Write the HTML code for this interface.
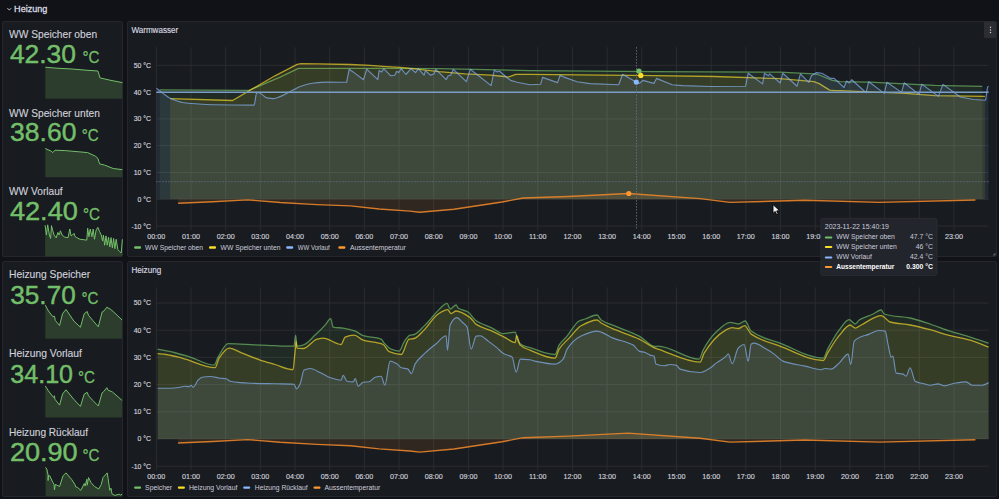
<!DOCTYPE html><html><head><meta charset="utf-8"><style>*{margin:0;padding:0}html,body{width:999px;height:499px;overflow:hidden;background:#111217}svg{display:block;font-family:'Liberation Sans',sans-serif;}</style></head><body>
<svg width="999" height="499" viewBox="0 0 999 499">
<rect width="999" height="499" fill="#111217"/>
<path d="M7.4 8.1 L9.3 10.1 L11.2 8.1" fill="none" stroke="#ccccdc" stroke-width="0.9"/>
<text x="14.1" y="11.6" font-size="9.1" fill="#d8d9e0" textLength="33.3" lengthAdjust="spacingAndGlyphs" stroke="#d8d9e0" stroke-width="0.3">Heizung</text>
<rect x="2.5" y="21.5" width="120" height="235" rx="1.5" fill="#181b1f" stroke="#24262c" stroke-width="1"/>
<rect x="2.5" y="261.5" width="120" height="235" rx="1.5" fill="#181b1f" stroke="#24262c" stroke-width="1"/>
<rect x="127.5" y="21.5" width="869" height="235" rx="1.5" fill="#181b1f" stroke="#24262c" stroke-width="1"/>
<rect x="127.5" y="261.5" width="869" height="235" rx="1.5" fill="#181b1f" stroke="#24262c" stroke-width="1"/>
<path d="M45.3 67.2 L57 68.2 L72 69 L85 70.1 L97.9 71 L100 77.9 L110 80.2 L122.4 82.6 L122.4 98.7 L45.3 98.7 Z" fill="#2c3c2d"/>
<path d="M45.3 67.2 L57 68.2 L72 69 L85 70.1 L97.9 71 L100 77.9 L110 80.2 L122.4 82.6" fill="none" stroke="#73bf69" stroke-width="1" stroke-linejoin="round"/>
<text x="9.1" y="37.7" font-size="10.2" fill="#d0d1dc" textLength="88" lengthAdjust="spacingAndGlyphs" stroke="#d0d1dc" stroke-width="0.12">WW Speicher oben</text>
<text x="9.9" y="62.5" font-size="25.5" fill="#73bf69" textLength="66.1" lengthAdjust="spacingAndGlyphs" stroke="#73bf69" stroke-width="0.45">42.30</text>
<text x="82.5" y="62.5" font-size="15.8" fill="#73bf69" textLength="17" lengthAdjust="spacingAndGlyphs" stroke="#73bf69" stroke-width="0.3">°C</text>
<path d="M45.28 148.51 L51.06 151.06 L52.77 152.6 L54.89 150.21 L65.53 150.64 L78.3 151.74 L87.66 152.6 L95.32 156.17 L97.87 158.3 L99.57 163.83 L104.68 165.11 L113.19 168.51 L122.38 169.62 L122.38 177.2 L45.28 177.2 Z" fill="#2c3c2d"/>
<path d="M45.28 148.51 L51.06 151.06 L52.77 152.6 L54.89 150.21 L65.53 150.64 L78.3 151.74 L87.66 152.6 L95.32 156.17 L97.87 158.3 L99.57 163.83 L104.68 165.11 L113.19 168.51 L122.38 169.62" fill="none" stroke="#73bf69" stroke-width="1" stroke-linejoin="round"/>
<text x="9.1" y="116.7" font-size="10.2" fill="#d0d1dc" textLength="90.8" lengthAdjust="spacingAndGlyphs" stroke="#d0d1dc" stroke-width="0.12">WW Speicher unten</text>
<text x="10.1" y="141.4" font-size="25.5" fill="#73bf69" textLength="66.3" lengthAdjust="spacingAndGlyphs" stroke="#73bf69" stroke-width="0.45">38.60</text>
<text x="81.8" y="141.4" font-size="15.8" fill="#73bf69" textLength="17" lengthAdjust="spacingAndGlyphs" stroke="#73bf69" stroke-width="0.3">°C</text>
<path d="M45.11 225.23 L46.38 235.02 L47.66 224.81 L49.36 235.02 L50.64 238.43 L51.49 225.66 L52.77 230.77 L54.04 235.02 L56.17 238 L57.87 232.47 L59.15 235.02 L60.43 230.77 L62.13 235.02 L64.68 237.15 L68.09 237.57 L69.79 229.06 L71.06 235.87 L72.34 235.02 L74.04 233.32 L74.89 236.3 L76.6 237.57 L80 239.28 L86.81 240.13 L87.66 228.21 L88.94 236.72 L90.21 229.06 L91.91 236.72 L93.19 229.06 L94.47 239.28 L96.17 229.91 L97.87 227.36 L99.57 231.62 L101.28 235.02 L102.55 240.98 L103.4 235.02 L104.68 245.23 L105.96 235.87 L107.23 245.23 L108.51 237.15 L109.79 246.94 L111.06 237.57 L112.34 247.79 L113.62 238.43 L114.89 248.64 L116.17 239.28 L117.87 249.49 L119.57 251.62 L121.28 252.89 L122.38 239.28 L122.38 256.5 L45.11 256.5 Z" fill="#2c3c2d"/>
<path d="M45.11 225.23 L46.38 235.02 L47.66 224.81 L49.36 235.02 L50.64 238.43 L51.49 225.66 L52.77 230.77 L54.04 235.02 L56.17 238 L57.87 232.47 L59.15 235.02 L60.43 230.77 L62.13 235.02 L64.68 237.15 L68.09 237.57 L69.79 229.06 L71.06 235.87 L72.34 235.02 L74.04 233.32 L74.89 236.3 L76.6 237.57 L80 239.28 L86.81 240.13 L87.66 228.21 L88.94 236.72 L90.21 229.06 L91.91 236.72 L93.19 229.06 L94.47 239.28 L96.17 229.91 L97.87 227.36 L99.57 231.62 L101.28 235.02 L102.55 240.98 L103.4 235.02 L104.68 245.23 L105.96 235.87 L107.23 245.23 L108.51 237.15 L109.79 246.94 L111.06 237.57 L112.34 247.79 L113.62 238.43 L114.89 248.64 L116.17 239.28 L117.87 249.49 L119.57 251.62 L121.28 252.89 L122.38 239.28" fill="none" stroke="#73bf69" stroke-width="1" stroke-linejoin="round"/>
<text x="9" y="194.7" font-size="10.2" fill="#d0d1dc" textLength="53.7" lengthAdjust="spacingAndGlyphs" stroke="#d0d1dc" stroke-width="0.12">WW Vorlauf</text>
<text x="9.9" y="220.3" font-size="25.5" fill="#73bf69" textLength="68" lengthAdjust="spacingAndGlyphs" stroke="#73bf69" stroke-width="0.45">42.40</text>
<text x="83" y="220.3" font-size="15.8" fill="#73bf69" textLength="17" lengthAdjust="spacingAndGlyphs" stroke="#73bf69" stroke-width="0.3">°C</text>
<path d="M45.28 305.11 L48.51 311.06 L52.77 316.6 L54.47 316.17 L55.32 320.43 L59.57 325.53 L62.55 313.62 L65.96 309.36 L74.04 321.28 L80.43 327.23 L84.26 313.62 L87.23 311.49 L88.51 315.32 L92.77 320.43 L98.3 326.81 L102.13 311.91 L103.83 311.06 L106.81 307.23 L110.64 309.36 L113.19 311.49 L122.13 320 L122.13 338.8 L45.28 338.8 Z" fill="#2c3c2d"/>
<path d="M45.28 305.11 L48.51 311.06 L52.77 316.6 L54.47 316.17 L55.32 320.43 L59.57 325.53 L62.55 313.62 L65.96 309.36 L74.04 321.28 L80.43 327.23 L84.26 313.62 L87.23 311.49 L88.51 315.32 L92.77 320.43 L98.3 326.81 L102.13 311.91 L103.83 311.06 L106.81 307.23 L110.64 309.36 L113.19 311.49 L122.13 320" fill="none" stroke="#73bf69" stroke-width="1" stroke-linejoin="round"/>
<text x="9" y="277.9" font-size="10.2" fill="#d0d1dc" textLength="81.2" lengthAdjust="spacingAndGlyphs" stroke="#d0d1dc" stroke-width="0.12">Heizung Speicher</text>
<text x="10.3" y="303.7" font-size="25.5" fill="#73bf69" textLength="65.4" lengthAdjust="spacingAndGlyphs" stroke="#73bf69" stroke-width="0.45">35.70</text>
<text x="81.5" y="303.7" font-size="15.8" fill="#73bf69" textLength="17" lengthAdjust="spacingAndGlyphs" stroke="#73bf69" stroke-width="0.3">°C</text>
<path d="M45.28 385.96 L48.51 391.06 L53.62 397.45 L54.47 395.74 L54.89 399.15 L59.57 405.11 L62.55 394.04 L65.96 389.79 L74.04 399.57 L80.43 406.38 L84.26 394.04 L87.23 392.34 L88.51 395.74 L92.77 400.43 L98.3 405.96 L102.13 392.77 L103.83 391.49 L106.81 387.66 L108.09 390.21 L112.34 391.91 L122.13 400.43 L122.13 417.6 L45.28 417.6 Z" fill="#2c3c2d"/>
<path d="M45.28 385.96 L48.51 391.06 L53.62 397.45 L54.47 395.74 L54.89 399.15 L59.57 405.11 L62.55 394.04 L65.96 389.79 L74.04 399.57 L80.43 406.38 L84.26 394.04 L87.23 392.34 L88.51 395.74 L92.77 400.43 L98.3 405.96 L102.13 392.77 L103.83 391.49 L106.81 387.66 L108.09 390.21 L112.34 391.91 L122.13 400.43" fill="none" stroke="#73bf69" stroke-width="1" stroke-linejoin="round"/>
<text x="9" y="357" font-size="10.2" fill="#d0d1dc" textLength="73" lengthAdjust="spacingAndGlyphs" stroke="#d0d1dc" stroke-width="0.12">Heizung Vorlauf</text>
<text x="10.3" y="382.8" font-size="25.5" fill="#73bf69" textLength="62.7" lengthAdjust="spacingAndGlyphs" stroke="#73bf69" stroke-width="0.45">34.10</text>
<text x="77.9" y="382.8" font-size="15.8" fill="#73bf69" textLength="17" lengthAdjust="spacingAndGlyphs" stroke="#73bf69" stroke-width="0.3">°C</text>
<path d="M45.53 467.36 L46.81 469.06 L48.09 475.02 L48.09 480.55 L48.51 475.45 L49.79 475.87 L52.77 482.26 L54.04 484.38 L54.47 489.91 L55.32 484.38 L59.57 486.51 L62.98 475.87 L65.96 472.89 L71.49 479.28 L74.89 484.38 L75.74 486.94 L77.45 487.36 L80.85 490.34 L84.26 483.53 L85.11 486.09 L86.81 479.28 L87.23 485.23 L88.51 477.57 L91.06 482.68 L94.47 486.51 L98.72 489.06 L101.28 484.38 L102.98 477.57 L107.23 472.89 L108.09 478.43 L109.79 490.34 L110.64 488.64 L111.06 488.21 L111.91 493.74 L114.89 495.45 L119.15 494.17 L120.43 495.02 L122.13 494.17 L122.13 496.3 L45.53 496.3 Z" fill="#2c3c2d"/>
<path d="M45.53 467.36 L46.81 469.06 L48.09 475.02 L48.09 480.55 L48.51 475.45 L49.79 475.87 L52.77 482.26 L54.04 484.38 L54.47 489.91 L55.32 484.38 L59.57 486.51 L62.98 475.87 L65.96 472.89 L71.49 479.28 L74.89 484.38 L75.74 486.94 L77.45 487.36 L80.85 490.34 L84.26 483.53 L85.11 486.09 L86.81 479.28 L87.23 485.23 L88.51 477.57 L91.06 482.68 L94.47 486.51 L98.72 489.06 L101.28 484.38 L102.98 477.57 L107.23 472.89 L108.09 478.43 L109.79 490.34 L110.64 488.64 L111.06 488.21 L111.91 493.74 L114.89 495.45 L119.15 494.17 L120.43 495.02 L122.13 494.17" fill="none" stroke="#73bf69" stroke-width="1" stroke-linejoin="round"/>
<text x="9" y="435.6" font-size="10.2" fill="#d0d1dc" textLength="79" lengthAdjust="spacingAndGlyphs" stroke="#d0d1dc" stroke-width="0.12">Heizung Rücklauf</text>
<text x="9.9" y="461.3" font-size="25.5" fill="#73bf69" textLength="67.8" lengthAdjust="spacingAndGlyphs" stroke="#73bf69" stroke-width="0.45">20.90</text>
<text x="82.5" y="461.3" font-size="15.8" fill="#73bf69" textLength="17" lengthAdjust="spacingAndGlyphs" stroke="#73bf69" stroke-width="0.3">°C</text>
<text x="131.4" y="32.8" font-size="8.4" fill="#d8d9e0" textLength="46.8" lengthAdjust="spacingAndGlyphs" stroke="#d8d9e0" stroke-width="0.15">Warmwasser</text>
<line x1="156.3" x2="988.6" y1="226.1" y2="226.1" stroke="#2a2c31" stroke-width="1"/>
<text x="151" y="228.55" font-size="6.9" fill="#d0d1dc" text-anchor="end" stroke="#d0d1dc" stroke-width="0.15">-10 °C</text>
<line x1="156.3" x2="988.6" y1="199.3" y2="199.3" stroke="#2a2c31" stroke-width="1"/>
<text x="151" y="201.75" font-size="6.9" fill="#d0d1dc" text-anchor="end" stroke="#d0d1dc" stroke-width="0.15">0 °C</text>
<line x1="156.3" x2="988.6" y1="172.5" y2="172.5" stroke="#2a2c31" stroke-width="1"/>
<text x="151" y="174.95" font-size="6.9" fill="#d0d1dc" text-anchor="end" stroke="#d0d1dc" stroke-width="0.15">10 °C</text>
<line x1="156.3" x2="988.6" y1="145.7" y2="145.7" stroke="#2a2c31" stroke-width="1"/>
<text x="151" y="148.15" font-size="6.9" fill="#d0d1dc" text-anchor="end" stroke="#d0d1dc" stroke-width="0.15">20 °C</text>
<line x1="156.3" x2="988.6" y1="118.9" y2="118.9" stroke="#2a2c31" stroke-width="1"/>
<text x="151" y="121.35" font-size="6.9" fill="#d0d1dc" text-anchor="end" stroke="#d0d1dc" stroke-width="0.15">30 °C</text>
<line x1="156.3" x2="988.6" y1="92.1" y2="92.1" stroke="#2a2c31" stroke-width="1"/>
<text x="151" y="94.55" font-size="6.9" fill="#d0d1dc" text-anchor="end" stroke="#d0d1dc" stroke-width="0.15">40 °C</text>
<line x1="156.3" x2="988.6" y1="65.3" y2="65.3" stroke="#2a2c31" stroke-width="1"/>
<text x="151" y="67.75" font-size="6.9" fill="#d0d1dc" text-anchor="end" stroke="#d0d1dc" stroke-width="0.15">50 °C</text>
<line x1="156.3" x2="156.3" y1="47.2" y2="230.2" stroke="#2a2c31" stroke-width="1"/>
<text x="156.3" y="238.8" font-size="7.2" fill="#d0d1dc" text-anchor="middle" stroke="#d0d1dc" stroke-width="0.15">00:00</text>
<line x1="190.98" x2="190.98" y1="47.2" y2="230.2" stroke="#2a2c31" stroke-width="1"/>
<text x="190.98" y="238.8" font-size="7.2" fill="#d0d1dc" text-anchor="middle" stroke="#d0d1dc" stroke-width="0.15">01:00</text>
<line x1="225.66" x2="225.66" y1="47.2" y2="230.2" stroke="#2a2c31" stroke-width="1"/>
<text x="225.66" y="238.8" font-size="7.2" fill="#d0d1dc" text-anchor="middle" stroke="#d0d1dc" stroke-width="0.15">02:00</text>
<line x1="260.34" x2="260.34" y1="47.2" y2="230.2" stroke="#2a2c31" stroke-width="1"/>
<text x="260.34" y="238.8" font-size="7.2" fill="#d0d1dc" text-anchor="middle" stroke="#d0d1dc" stroke-width="0.15">03:00</text>
<line x1="295.02" x2="295.02" y1="47.2" y2="230.2" stroke="#2a2c31" stroke-width="1"/>
<text x="295.02" y="238.8" font-size="7.2" fill="#d0d1dc" text-anchor="middle" stroke="#d0d1dc" stroke-width="0.15">04:00</text>
<line x1="329.7" x2="329.7" y1="47.2" y2="230.2" stroke="#2a2c31" stroke-width="1"/>
<text x="329.7" y="238.8" font-size="7.2" fill="#d0d1dc" text-anchor="middle" stroke="#d0d1dc" stroke-width="0.15">05:00</text>
<line x1="364.38" x2="364.38" y1="47.2" y2="230.2" stroke="#2a2c31" stroke-width="1"/>
<text x="364.38" y="238.8" font-size="7.2" fill="#d0d1dc" text-anchor="middle" stroke="#d0d1dc" stroke-width="0.15">06:00</text>
<line x1="399.06" x2="399.06" y1="47.2" y2="230.2" stroke="#2a2c31" stroke-width="1"/>
<text x="399.06" y="238.8" font-size="7.2" fill="#d0d1dc" text-anchor="middle" stroke="#d0d1dc" stroke-width="0.15">07:00</text>
<line x1="433.74" x2="433.74" y1="47.2" y2="230.2" stroke="#2a2c31" stroke-width="1"/>
<text x="433.74" y="238.8" font-size="7.2" fill="#d0d1dc" text-anchor="middle" stroke="#d0d1dc" stroke-width="0.15">08:00</text>
<line x1="468.42" x2="468.42" y1="47.2" y2="230.2" stroke="#2a2c31" stroke-width="1"/>
<text x="468.42" y="238.8" font-size="7.2" fill="#d0d1dc" text-anchor="middle" stroke="#d0d1dc" stroke-width="0.15">09:00</text>
<line x1="503.1" x2="503.1" y1="47.2" y2="230.2" stroke="#2a2c31" stroke-width="1"/>
<text x="503.1" y="238.8" font-size="7.2" fill="#d0d1dc" text-anchor="middle" stroke="#d0d1dc" stroke-width="0.15">10:00</text>
<line x1="537.78" x2="537.78" y1="47.2" y2="230.2" stroke="#2a2c31" stroke-width="1"/>
<text x="537.78" y="238.8" font-size="7.2" fill="#d0d1dc" text-anchor="middle" stroke="#d0d1dc" stroke-width="0.15">11:00</text>
<line x1="572.46" x2="572.46" y1="47.2" y2="230.2" stroke="#2a2c31" stroke-width="1"/>
<text x="572.46" y="238.8" font-size="7.2" fill="#d0d1dc" text-anchor="middle" stroke="#d0d1dc" stroke-width="0.15">12:00</text>
<line x1="607.14" x2="607.14" y1="47.2" y2="230.2" stroke="#2a2c31" stroke-width="1"/>
<text x="607.14" y="238.8" font-size="7.2" fill="#d0d1dc" text-anchor="middle" stroke="#d0d1dc" stroke-width="0.15">13:00</text>
<line x1="641.82" x2="641.82" y1="47.2" y2="230.2" stroke="#2a2c31" stroke-width="1"/>
<text x="641.82" y="238.8" font-size="7.2" fill="#d0d1dc" text-anchor="middle" stroke="#d0d1dc" stroke-width="0.15">14:00</text>
<line x1="676.5" x2="676.5" y1="47.2" y2="230.2" stroke="#2a2c31" stroke-width="1"/>
<text x="676.5" y="238.8" font-size="7.2" fill="#d0d1dc" text-anchor="middle" stroke="#d0d1dc" stroke-width="0.15">15:00</text>
<line x1="711.18" x2="711.18" y1="47.2" y2="230.2" stroke="#2a2c31" stroke-width="1"/>
<text x="711.18" y="238.8" font-size="7.2" fill="#d0d1dc" text-anchor="middle" stroke="#d0d1dc" stroke-width="0.15">16:00</text>
<line x1="745.86" x2="745.86" y1="47.2" y2="230.2" stroke="#2a2c31" stroke-width="1"/>
<text x="745.86" y="238.8" font-size="7.2" fill="#d0d1dc" text-anchor="middle" stroke="#d0d1dc" stroke-width="0.15">17:00</text>
<line x1="780.54" x2="780.54" y1="47.2" y2="230.2" stroke="#2a2c31" stroke-width="1"/>
<text x="780.54" y="238.8" font-size="7.2" fill="#d0d1dc" text-anchor="middle" stroke="#d0d1dc" stroke-width="0.15">18:00</text>
<line x1="815.22" x2="815.22" y1="47.2" y2="230.2" stroke="#2a2c31" stroke-width="1"/>
<text x="815.22" y="238.8" font-size="7.2" fill="#d0d1dc" text-anchor="middle" stroke="#d0d1dc" stroke-width="0.15">19:00</text>
<line x1="849.9" x2="849.9" y1="47.2" y2="230.2" stroke="#2a2c31" stroke-width="1"/>
<text x="849.9" y="238.8" font-size="7.2" fill="#d0d1dc" text-anchor="middle" stroke="#d0d1dc" stroke-width="0.15">20:00</text>
<line x1="884.58" x2="884.58" y1="47.2" y2="230.2" stroke="#2a2c31" stroke-width="1"/>
<text x="884.58" y="238.8" font-size="7.2" fill="#d0d1dc" text-anchor="middle" stroke="#d0d1dc" stroke-width="0.15">21:00</text>
<line x1="919.26" x2="919.26" y1="47.2" y2="230.2" stroke="#2a2c31" stroke-width="1"/>
<text x="919.26" y="238.8" font-size="7.2" fill="#d0d1dc" text-anchor="middle" stroke="#d0d1dc" stroke-width="0.15">22:00</text>
<line x1="953.94" x2="953.94" y1="47.2" y2="230.2" stroke="#2a2c31" stroke-width="1"/>
<text x="953.94" y="238.8" font-size="7.2" fill="#d0d1dc" text-anchor="middle" stroke="#d0d1dc" stroke-width="0.15">23:00</text>
<rect x="134.1" y="246.3" width="7" height="2.4" rx="1" fill="#73bf69"/>
<text x="145.1" y="249.8" font-size="6.8" fill="#ccccdc" textLength="58" lengthAdjust="spacingAndGlyphs">WW Speicher oben</text>
<rect x="209" y="246.3" width="7" height="2.4" rx="1" fill="#fade2a"/>
<text x="220.6" y="249.8" font-size="6.8" fill="#ccccdc" textLength="59.8" lengthAdjust="spacingAndGlyphs">WW Speicher unten</text>
<rect x="286.2" y="246.3" width="7" height="2.4" rx="1" fill="#8ab8ff"/>
<text x="297.8" y="249.8" font-size="6.8" fill="#ccccdc" textLength="32" lengthAdjust="spacingAndGlyphs">WW Vorlauf</text>
<rect x="338.4" y="246.3" width="7" height="2.4" rx="1" fill="#ff9830"/>
<text x="350" y="249.8" font-size="6.8" fill="#ccccdc" textLength="55.8" lengthAdjust="spacingAndGlyphs">Aussentemperatur</text>
<text x="131.4" y="272.9" font-size="8.4" fill="#d8d9e0" textLength="29.8" lengthAdjust="spacingAndGlyphs" stroke="#d8d9e0" stroke-width="0.15">Heizung</text>
<line x1="156.3" x2="988.6" y1="466.2" y2="466.2" stroke="#2a2c31" stroke-width="1"/>
<text x="151" y="468.65" font-size="6.9" fill="#d0d1dc" text-anchor="end" stroke="#d0d1dc" stroke-width="0.15">-10 °C</text>
<line x1="156.3" x2="988.6" y1="439" y2="439" stroke="#2a2c31" stroke-width="1"/>
<text x="151" y="441.45" font-size="6.9" fill="#d0d1dc" text-anchor="end" stroke="#d0d1dc" stroke-width="0.15">0 °C</text>
<line x1="156.3" x2="988.6" y1="411.8" y2="411.8" stroke="#2a2c31" stroke-width="1"/>
<text x="151" y="414.25" font-size="6.9" fill="#d0d1dc" text-anchor="end" stroke="#d0d1dc" stroke-width="0.15">10 °C</text>
<line x1="156.3" x2="988.6" y1="384.6" y2="384.6" stroke="#2a2c31" stroke-width="1"/>
<text x="151" y="387.05" font-size="6.9" fill="#d0d1dc" text-anchor="end" stroke="#d0d1dc" stroke-width="0.15">20 °C</text>
<line x1="156.3" x2="988.6" y1="357.4" y2="357.4" stroke="#2a2c31" stroke-width="1"/>
<text x="151" y="359.85" font-size="6.9" fill="#d0d1dc" text-anchor="end" stroke="#d0d1dc" stroke-width="0.15">30 °C</text>
<line x1="156.3" x2="988.6" y1="330.2" y2="330.2" stroke="#2a2c31" stroke-width="1"/>
<text x="151" y="332.65" font-size="6.9" fill="#d0d1dc" text-anchor="end" stroke="#d0d1dc" stroke-width="0.15">40 °C</text>
<line x1="156.3" x2="988.6" y1="303" y2="303" stroke="#2a2c31" stroke-width="1"/>
<text x="151" y="305.45" font-size="6.9" fill="#d0d1dc" text-anchor="end" stroke="#d0d1dc" stroke-width="0.15">50 °C</text>
<line x1="156.3" x2="156.3" y1="287.3" y2="470.3" stroke="#2a2c31" stroke-width="1"/>
<text x="156.3" y="478.9" font-size="7.2" fill="#d0d1dc" text-anchor="middle" stroke="#d0d1dc" stroke-width="0.15">00:00</text>
<line x1="190.98" x2="190.98" y1="287.3" y2="470.3" stroke="#2a2c31" stroke-width="1"/>
<text x="190.98" y="478.9" font-size="7.2" fill="#d0d1dc" text-anchor="middle" stroke="#d0d1dc" stroke-width="0.15">01:00</text>
<line x1="225.66" x2="225.66" y1="287.3" y2="470.3" stroke="#2a2c31" stroke-width="1"/>
<text x="225.66" y="478.9" font-size="7.2" fill="#d0d1dc" text-anchor="middle" stroke="#d0d1dc" stroke-width="0.15">02:00</text>
<line x1="260.34" x2="260.34" y1="287.3" y2="470.3" stroke="#2a2c31" stroke-width="1"/>
<text x="260.34" y="478.9" font-size="7.2" fill="#d0d1dc" text-anchor="middle" stroke="#d0d1dc" stroke-width="0.15">03:00</text>
<line x1="295.02" x2="295.02" y1="287.3" y2="470.3" stroke="#2a2c31" stroke-width="1"/>
<text x="295.02" y="478.9" font-size="7.2" fill="#d0d1dc" text-anchor="middle" stroke="#d0d1dc" stroke-width="0.15">04:00</text>
<line x1="329.7" x2="329.7" y1="287.3" y2="470.3" stroke="#2a2c31" stroke-width="1"/>
<text x="329.7" y="478.9" font-size="7.2" fill="#d0d1dc" text-anchor="middle" stroke="#d0d1dc" stroke-width="0.15">05:00</text>
<line x1="364.38" x2="364.38" y1="287.3" y2="470.3" stroke="#2a2c31" stroke-width="1"/>
<text x="364.38" y="478.9" font-size="7.2" fill="#d0d1dc" text-anchor="middle" stroke="#d0d1dc" stroke-width="0.15">06:00</text>
<line x1="399.06" x2="399.06" y1="287.3" y2="470.3" stroke="#2a2c31" stroke-width="1"/>
<text x="399.06" y="478.9" font-size="7.2" fill="#d0d1dc" text-anchor="middle" stroke="#d0d1dc" stroke-width="0.15">07:00</text>
<line x1="433.74" x2="433.74" y1="287.3" y2="470.3" stroke="#2a2c31" stroke-width="1"/>
<text x="433.74" y="478.9" font-size="7.2" fill="#d0d1dc" text-anchor="middle" stroke="#d0d1dc" stroke-width="0.15">08:00</text>
<line x1="468.42" x2="468.42" y1="287.3" y2="470.3" stroke="#2a2c31" stroke-width="1"/>
<text x="468.42" y="478.9" font-size="7.2" fill="#d0d1dc" text-anchor="middle" stroke="#d0d1dc" stroke-width="0.15">09:00</text>
<line x1="503.1" x2="503.1" y1="287.3" y2="470.3" stroke="#2a2c31" stroke-width="1"/>
<text x="503.1" y="478.9" font-size="7.2" fill="#d0d1dc" text-anchor="middle" stroke="#d0d1dc" stroke-width="0.15">10:00</text>
<line x1="537.78" x2="537.78" y1="287.3" y2="470.3" stroke="#2a2c31" stroke-width="1"/>
<text x="537.78" y="478.9" font-size="7.2" fill="#d0d1dc" text-anchor="middle" stroke="#d0d1dc" stroke-width="0.15">11:00</text>
<line x1="572.46" x2="572.46" y1="287.3" y2="470.3" stroke="#2a2c31" stroke-width="1"/>
<text x="572.46" y="478.9" font-size="7.2" fill="#d0d1dc" text-anchor="middle" stroke="#d0d1dc" stroke-width="0.15">12:00</text>
<line x1="607.14" x2="607.14" y1="287.3" y2="470.3" stroke="#2a2c31" stroke-width="1"/>
<text x="607.14" y="478.9" font-size="7.2" fill="#d0d1dc" text-anchor="middle" stroke="#d0d1dc" stroke-width="0.15">13:00</text>
<line x1="641.82" x2="641.82" y1="287.3" y2="470.3" stroke="#2a2c31" stroke-width="1"/>
<text x="641.82" y="478.9" font-size="7.2" fill="#d0d1dc" text-anchor="middle" stroke="#d0d1dc" stroke-width="0.15">14:00</text>
<line x1="676.5" x2="676.5" y1="287.3" y2="470.3" stroke="#2a2c31" stroke-width="1"/>
<text x="676.5" y="478.9" font-size="7.2" fill="#d0d1dc" text-anchor="middle" stroke="#d0d1dc" stroke-width="0.15">15:00</text>
<line x1="711.18" x2="711.18" y1="287.3" y2="470.3" stroke="#2a2c31" stroke-width="1"/>
<text x="711.18" y="478.9" font-size="7.2" fill="#d0d1dc" text-anchor="middle" stroke="#d0d1dc" stroke-width="0.15">16:00</text>
<line x1="745.86" x2="745.86" y1="287.3" y2="470.3" stroke="#2a2c31" stroke-width="1"/>
<text x="745.86" y="478.9" font-size="7.2" fill="#d0d1dc" text-anchor="middle" stroke="#d0d1dc" stroke-width="0.15">17:00</text>
<line x1="780.54" x2="780.54" y1="287.3" y2="470.3" stroke="#2a2c31" stroke-width="1"/>
<text x="780.54" y="478.9" font-size="7.2" fill="#d0d1dc" text-anchor="middle" stroke="#d0d1dc" stroke-width="0.15">18:00</text>
<line x1="815.22" x2="815.22" y1="287.3" y2="470.3" stroke="#2a2c31" stroke-width="1"/>
<text x="815.22" y="478.9" font-size="7.2" fill="#d0d1dc" text-anchor="middle" stroke="#d0d1dc" stroke-width="0.15">19:00</text>
<line x1="849.9" x2="849.9" y1="287.3" y2="470.3" stroke="#2a2c31" stroke-width="1"/>
<text x="849.9" y="478.9" font-size="7.2" fill="#d0d1dc" text-anchor="middle" stroke="#d0d1dc" stroke-width="0.15">20:00</text>
<line x1="884.58" x2="884.58" y1="287.3" y2="470.3" stroke="#2a2c31" stroke-width="1"/>
<text x="884.58" y="478.9" font-size="7.2" fill="#d0d1dc" text-anchor="middle" stroke="#d0d1dc" stroke-width="0.15">21:00</text>
<line x1="919.26" x2="919.26" y1="287.3" y2="470.3" stroke="#2a2c31" stroke-width="1"/>
<text x="919.26" y="478.9" font-size="7.2" fill="#d0d1dc" text-anchor="middle" stroke="#d0d1dc" stroke-width="0.15">22:00</text>
<line x1="953.94" x2="953.94" y1="287.3" y2="470.3" stroke="#2a2c31" stroke-width="1"/>
<text x="953.94" y="478.9" font-size="7.2" fill="#d0d1dc" text-anchor="middle" stroke="#d0d1dc" stroke-width="0.15">23:00</text>
<rect x="134.1" y="486.4" width="7" height="2.4" rx="1" fill="#73bf69"/>
<text x="145.1" y="489.9" font-size="6.8" fill="#ccccdc" textLength="27" lengthAdjust="spacingAndGlyphs">Speicher</text>
<rect x="177.9" y="486.4" width="7" height="2.4" rx="1" fill="#fade2a"/>
<text x="188.9" y="489.9" font-size="6.8" fill="#ccccdc" textLength="48.5" lengthAdjust="spacingAndGlyphs">Heizung Vorlauf</text>
<rect x="243.2" y="486.4" width="7" height="2.4" rx="1" fill="#8ab8ff"/>
<text x="254.8" y="489.9" font-size="6.8" fill="#ccccdc" textLength="52.8" lengthAdjust="spacingAndGlyphs">Heizung Rücklauf</text>
<rect x="313.5" y="486.4" width="7" height="2.4" rx="1" fill="#ff9830"/>
<text x="324.5" y="489.9" font-size="6.8" fill="#ccccdc" textLength="55.7" lengthAdjust="spacingAndGlyphs">Aussentemperatur</text>
<rect x="984" y="21.5" width="12" height="16.5" rx="1.5" fill="#2b2d33"/>
<circle cx="990.5" cy="27.3" r="0.75" fill="#ccccdc"/>
<circle cx="990.5" cy="30" r="0.75" fill="#ccccdc"/>
<circle cx="990.5" cy="32.6" r="0.75" fill="#ccccdc"/>
<g>
<path d="M159.8 89.9 L248.9 90.4 L280 77.1 L298.4 68.3 L347.9 68.4 L405 68.4 L439 68.7 L530 70.6 L655 71.7 L780 72.2 L814 73.9 L818 74.5 L832.3 80.4 L840.1 81.7 L870 82.1 L934.6 85.3 L982.3 86.4 L982.3 199.3 L159.8 199.3 Z" fill="#73bf69" fill-opacity="0.1"/>
<path d="M159.8 89.9 L248.9 90.4 L280 77.1 L298.4 68.3 L347.9 68.4 L405 68.4 L439 68.7 L530 70.6 L655 71.7 L780 72.2 L814 73.9 L818 74.5 L832.3 80.4 L840.1 81.7 L870 82.1 L934.6 85.3 L982.3 86.4" fill="none" stroke="#73bf69" stroke-width="1.3" stroke-opacity="0.66" stroke-linejoin="round"/>
<path d="M170.2 98.6 L232.6 100.5 L275 75.8 L297.1 64.4 L301 63.7 L318 63.8 L350.5 64.5 L370 65.4 L383 66.3 L400 67.4 L413 68.7 L439 71.7 L465 73.9 L491 75.2 L504 76.5 L508 77.1 L515.8 74.3 L530 74.3 L655 75.6 L715 76.5 L780 78.7 L814 81.7 L819.2 83.6 L829.7 90.1 L833.6 90.4 L870 91.8 L902.3 93.1 L934.6 95.7 L984.9 96.3 L984.9 199.3 L170.2 199.3 Z" fill="#fade2a" fill-opacity="0.1"/>
<path d="M170.2 98.6 L232.6 100.5 L275 75.8 L297.1 64.4 L301 63.7 L318 63.8 L350.5 64.5 L370 65.4 L383 66.3 L400 67.4 L413 68.7 L439 71.7 L465 73.9 L491 75.2 L504 76.5 L508 77.1 L515.8 74.3 L530 74.3 L655 75.6 L715 76.5 L780 78.7 L814 81.7 L819.2 83.6 L829.7 90.1 L833.6 90.4 L870 91.8 L902.3 93.1 L934.6 95.7 L984.9 96.3" fill="none" stroke="#fade2a" stroke-width="1.3" stroke-opacity="0.66" stroke-linejoin="round"/>
<path d="M156.5 88.2 C158.67 89.93 160.83 91.82 163 93.4 C165.6 95.3 168.2 97.42 170.8 98.6 C174.7 100.37 178.6 101.93 182.5 102.5 C189 103.44 195.5 103.82 202 104.2 C206.33 104.46 210.67 104.74 215 104.8 C228.03 104.99 241.07 105.1 254.1 105.1 C254.97 105.1 255.83 92.7 256.7 92.7 C257.37 92.7 258.03 92.7 258.7 92.7 C261.5 92.7 264.3 97.4 267.1 97.9 C269.27 98.29 271.43 98.6 273.6 98.6 C275.73 98.6 277.87 97.41 280 96.6 C282.67 95.59 285.33 94.02 288 92.7 C292.33 90.56 296.67 87.63 301 86.2 C305.33 84.77 309.67 83.47 314 83 C318.33 82.53 322.67 82.1 327 82.1 C333.53 82.1 340.07 82.23 346.6 82.3 L349.2 69.3 L353.1 71.9 L363.5 79.7 L366.7 69.1 L377.8 79.7 L379.1 70.6 L381.7 71.9 L383.7 68.7 L390.8 75.8 L394.7 75.2 L396.7 71.3 L398.6 72.6 L401.2 68.7 L405.9 74.5 L411 68.7 L415.6 72.6 L418.2 68.7 L424.1 75.2 L425.4 70.6 L430.6 75.2 L433.8 73.9 L435.8 69.3 L446.2 79.7 L448.1 75.8 L450.7 75.2 L453.4 69.3 L466.4 81.7 L470.3 69.3 L491.1 85.6 L494.3 70 L496.9 71.9 L499.5 71.3 L510.6 80.4 L517.1 82.3 L530 84.7 L540.6 84.3 L542.6 77.4 L557.5 82.6 L560.1 75.2 L564 77.1 L577 81.7 L590.1 83.6 L618.7 84.7 L622.6 74.3 L635.6 81.7 L639.5 83.4 L642.8 80.4 L653.9 83.4 L656.5 78.4 L672.1 84.7 L682.5 85.6 L711.2 86.5 L745.6 86.2 L748.2 73.2 L762.6 83.9 L764.5 73.2 L768.4 75.8 L769.7 73.9 L780.2 83 L782.8 73.2 L797.1 86.2 L800.4 73.9 L808.8 82.3 L811.4 75.8 L816.6 72.6 L821.8 73.2 L831 78.4 L834.2 78.4 L844 87.5 L846.6 81 L849.2 83 L851.8 79.7 L866.1 92.7 L868.7 81.7 L884.3 93.4 L886.9 82.3 L901.6 92.4 L904.2 82.8 L919.1 94.4 L921.7 84.1 L938.4 96.3 L943 84.4 L960.4 97 L973.3 99.5 L985.6 100.2 L987.5 87.3 L988.5 86 L988.5 199.3 L156.5 199.3 Z" fill="#8ab8ff" fill-opacity="0.1"/>
<path d="M156.5 88.2 C158.67 89.93 160.83 91.82 163 93.4 C165.6 95.3 168.2 97.42 170.8 98.6 C174.7 100.37 178.6 101.93 182.5 102.5 C189 103.44 195.5 103.82 202 104.2 C206.33 104.46 210.67 104.74 215 104.8 C228.03 104.99 241.07 105.1 254.1 105.1 C254.97 105.1 255.83 92.7 256.7 92.7 C257.37 92.7 258.03 92.7 258.7 92.7 C261.5 92.7 264.3 97.4 267.1 97.9 C269.27 98.29 271.43 98.6 273.6 98.6 C275.73 98.6 277.87 97.41 280 96.6 C282.67 95.59 285.33 94.02 288 92.7 C292.33 90.56 296.67 87.63 301 86.2 C305.33 84.77 309.67 83.47 314 83 C318.33 82.53 322.67 82.1 327 82.1 C333.53 82.1 340.07 82.23 346.6 82.3 L349.2 69.3 L353.1 71.9 L363.5 79.7 L366.7 69.1 L377.8 79.7 L379.1 70.6 L381.7 71.9 L383.7 68.7 L390.8 75.8 L394.7 75.2 L396.7 71.3 L398.6 72.6 L401.2 68.7 L405.9 74.5 L411 68.7 L415.6 72.6 L418.2 68.7 L424.1 75.2 L425.4 70.6 L430.6 75.2 L433.8 73.9 L435.8 69.3 L446.2 79.7 L448.1 75.8 L450.7 75.2 L453.4 69.3 L466.4 81.7 L470.3 69.3 L491.1 85.6 L494.3 70 L496.9 71.9 L499.5 71.3 L510.6 80.4 L517.1 82.3 L530 84.7 L540.6 84.3 L542.6 77.4 L557.5 82.6 L560.1 75.2 L564 77.1 L577 81.7 L590.1 83.6 L618.7 84.7 L622.6 74.3 L635.6 81.7 L639.5 83.4 L642.8 80.4 L653.9 83.4 L656.5 78.4 L672.1 84.7 L682.5 85.6 L711.2 86.5 L745.6 86.2 L748.2 73.2 L762.6 83.9 L764.5 73.2 L768.4 75.8 L769.7 73.9 L780.2 83 L782.8 73.2 L797.1 86.2 L800.4 73.9 L808.8 82.3 L811.4 75.8 L816.6 72.6 L821.8 73.2 L831 78.4 L834.2 78.4 L844 87.5 L846.6 81 L849.2 83 L851.8 79.7 L866.1 92.7 L868.7 81.7 L884.3 93.4 L886.9 82.3 L901.6 92.4 L904.2 82.8 L919.1 94.4 L921.7 84.1 L938.4 96.3 L943 84.4 L960.4 97 L973.3 99.5 L985.6 100.2 L987.5 87.3 L988.5 86" fill="none" stroke="#8ab8ff" stroke-width="1.15" stroke-opacity="0.66" stroke-linejoin="round"/>
<path d="M178.1 203.3 L212.5 201.8 L247.6 199.9 L280.1 202.5 L316.6 204.6 L350.4 205.9 L379 209 L410 211.1 L419.5 212.2 L454 209.2 L502.1 202 L523.1 198 L568.2 196.5 L628.2 193.5 L700 198.6 L730 202.4 L804.8 200.3 L879.6 202.4 L975.4 200 L975.4 199.3 L178.1 199.3 Z" fill="#ff9830" fill-opacity="0.1"/>
<path d="M178.1 203.3 L212.5 201.8 L247.6 199.9 L280.1 202.5 L316.6 204.6 L350.4 205.9 L379 209 L410 211.1 L419.5 212.2 L454 209.2 L502.1 202 L523.1 198 L568.2 196.5 L628.2 193.5 L700 198.6 L730 202.4 L804.8 200.3 L879.6 202.4 L975.4 200" fill="none" stroke="#e8842a" stroke-width="1.4" stroke-opacity="0.9" stroke-linejoin="round"/>
<line x1="156.3" x2="988.6" y1="92.2" y2="92.2" stroke="#7a9ec8" stroke-width="1.5"/>
<line x1="156.3" x2="988.6" y1="181.7" y2="181.7" stroke="#5d7080" stroke-width="1" stroke-dasharray="1.3 1.7"/>
<line x1="636.5" x2="636.5" y1="47.2" y2="230.2" stroke="#607284" stroke-width="1" stroke-dasharray="1.3 1.7"/>
<circle cx="638.9" cy="71" r="2.6" fill="#73bf69"/>
<circle cx="640.8" cy="75.4" r="2.6" fill="#fade2a"/>
<circle cx="636.3" cy="82.1" r="2.6" fill="#8ab8ff"/>
<circle cx="628.8" cy="193.5" r="2.6" fill="#ff9830"/>
</g>
<path d="M157.6 349.1 C163.07 350.23 168.53 351.19 174 352.5 C179.37 353.79 184.73 355.46 190.1 357.1 C198.1 359.55 206.1 365.1 214.1 365.1 C215.43 365.1 216.77 359.29 218.1 357.1 C221.47 351.57 224.83 343.7 228.2 343.7 C232.2 343.7 236.2 343.95 240.2 344.1 C251.8 344.54 263.4 345.38 275 345.7 C281.33 345.88 287.67 346.1 294 346.1 C294.53 346.1 295.07 335.1 295.6 335.1 C296.07 335.1 296.53 346.1 297 346.1 C299.03 346.1 301.07 345.62 303.1 345.1 C307.1 344.08 311.1 338.75 315.1 335.1 C318.43 332.06 321.77 328.71 325.1 325.1 C326.97 323.08 328.83 318.6 330.7 318.6 C331.5 318.6 332.3 326.91 333.1 327.1 C336.43 327.9 339.77 327.63 343.1 328.1 C347.13 328.67 351.17 329.66 355.2 331.1 C357.87 332.05 360.53 334.89 363.2 335.7 C369.2 337.52 375.2 336.68 381.2 339.1 C382.2 339.5 383.2 342.03 384.2 343.1 C386.53 345.61 388.87 348.19 391.2 349.1 C393.87 350.14 396.53 351.1 399.2 351.1 C400.8 351.1 402.4 344.42 404 342.1 C406 339.2 408 335.61 410 335.1 C411.33 334.76 412.67 334.81 414 334.5 C417.33 333.73 420.67 329.27 424 326.1 C427.37 322.89 430.73 318.7 434.1 315 C436.1 312.8 438.1 310.14 440.1 308.4 C442.43 306.37 444.77 303.4 447.1 303.4 C448.1 303.4 449.1 309 450.1 309 C452.1 309 454.1 305 456.1 305 C456.77 305 457.43 307.52 458.1 308 C461.43 310.42 464.77 309.98 468.1 312 C470.47 313.44 472.83 318.18 475.2 320 C476.87 321.28 478.53 322.15 480.2 323 C484.2 325.04 488.2 326.24 492.2 328.1 C495.87 329.8 499.53 333.7 503.2 333.7 C507.2 333.7 511.2 332.1 515.2 332.1 C516.2 332.1 517.2 340.32 518.2 341.7 C519.53 343.54 520.87 344.43 522.2 345.1 C524.8 346.41 527.4 346.91 530 347.7 C538.37 350.25 546.73 354.5 555.1 354.5 C556.43 354.5 557.77 347.21 559.1 345.1 C561.77 340.88 564.43 339.26 567.1 336.1 C571.1 331.37 575.1 322.98 579.1 321 C581.1 320.01 583.1 319.67 585.1 319 C589.1 317.67 593.1 315 597.1 315 C598.47 315 599.83 319.04 601.2 320 C605.87 323.28 610.53 324.11 615.2 326.1 C623.2 329.51 631.2 331.95 639.2 336.1 C644.47 338.83 649.73 346.5 655 346.5 C656 346.5 657 346.1 658 346.1 C671.7 346.1 685.4 359.1 699.1 359.1 C700.43 359.1 701.77 352.49 703.1 350.1 C707.43 342.35 711.77 336.1 716.1 332.1 C720.8 327.76 725.5 322.4 730.2 322.4 C732.87 322.4 735.53 324 738.2 324 C740.53 324 742.87 321 745.2 321 C747.2 321 749.2 329.56 751.2 331.1 C760.8 338.49 770.4 339.44 780 343.1 C794.37 348.58 808.73 358.1 823.1 358.1 C824.77 358.1 826.43 351.14 828.1 348.1 C831.77 341.42 835.43 334.77 839.1 330.1 C842.43 325.85 845.77 319.6 849.1 319.6 C851.13 319.6 853.17 324 855.2 324 C856.53 324 857.87 320.86 859.2 320 C863.87 316.98 868.53 316.17 873.2 314 C875.87 312.76 878.53 310 881.2 310 C882.2 310 883.2 313.65 884.2 314 C892.83 317.02 901.47 316.22 910.1 318 C916.77 319.38 923.43 321.84 930.1 324 C936.8 326.17 943.5 328.93 950.2 331.1 C956.87 333.26 963.53 335.02 970.2 337.1 C976.33 339.02 982.47 341.1 988.6 343.1 L988.6 439 L157.6 439 Z" fill="#73bf69" fill-opacity="0.1"/>
<path d="M157.6 349.1 C163.07 350.23 168.53 351.19 174 352.5 C179.37 353.79 184.73 355.46 190.1 357.1 C198.1 359.55 206.1 365.1 214.1 365.1 C215.43 365.1 216.77 359.29 218.1 357.1 C221.47 351.57 224.83 343.7 228.2 343.7 C232.2 343.7 236.2 343.95 240.2 344.1 C251.8 344.54 263.4 345.38 275 345.7 C281.33 345.88 287.67 346.1 294 346.1 C294.53 346.1 295.07 335.1 295.6 335.1 C296.07 335.1 296.53 346.1 297 346.1 C299.03 346.1 301.07 345.62 303.1 345.1 C307.1 344.08 311.1 338.75 315.1 335.1 C318.43 332.06 321.77 328.71 325.1 325.1 C326.97 323.08 328.83 318.6 330.7 318.6 C331.5 318.6 332.3 326.91 333.1 327.1 C336.43 327.9 339.77 327.63 343.1 328.1 C347.13 328.67 351.17 329.66 355.2 331.1 C357.87 332.05 360.53 334.89 363.2 335.7 C369.2 337.52 375.2 336.68 381.2 339.1 C382.2 339.5 383.2 342.03 384.2 343.1 C386.53 345.61 388.87 348.19 391.2 349.1 C393.87 350.14 396.53 351.1 399.2 351.1 C400.8 351.1 402.4 344.42 404 342.1 C406 339.2 408 335.61 410 335.1 C411.33 334.76 412.67 334.81 414 334.5 C417.33 333.73 420.67 329.27 424 326.1 C427.37 322.89 430.73 318.7 434.1 315 C436.1 312.8 438.1 310.14 440.1 308.4 C442.43 306.37 444.77 303.4 447.1 303.4 C448.1 303.4 449.1 309 450.1 309 C452.1 309 454.1 305 456.1 305 C456.77 305 457.43 307.52 458.1 308 C461.43 310.42 464.77 309.98 468.1 312 C470.47 313.44 472.83 318.18 475.2 320 C476.87 321.28 478.53 322.15 480.2 323 C484.2 325.04 488.2 326.24 492.2 328.1 C495.87 329.8 499.53 333.7 503.2 333.7 C507.2 333.7 511.2 332.1 515.2 332.1 C516.2 332.1 517.2 340.32 518.2 341.7 C519.53 343.54 520.87 344.43 522.2 345.1 C524.8 346.41 527.4 346.91 530 347.7 C538.37 350.25 546.73 354.5 555.1 354.5 C556.43 354.5 557.77 347.21 559.1 345.1 C561.77 340.88 564.43 339.26 567.1 336.1 C571.1 331.37 575.1 322.98 579.1 321 C581.1 320.01 583.1 319.67 585.1 319 C589.1 317.67 593.1 315 597.1 315 C598.47 315 599.83 319.04 601.2 320 C605.87 323.28 610.53 324.11 615.2 326.1 C623.2 329.51 631.2 331.95 639.2 336.1 C644.47 338.83 649.73 346.5 655 346.5 C656 346.5 657 346.1 658 346.1 C671.7 346.1 685.4 359.1 699.1 359.1 C700.43 359.1 701.77 352.49 703.1 350.1 C707.43 342.35 711.77 336.1 716.1 332.1 C720.8 327.76 725.5 322.4 730.2 322.4 C732.87 322.4 735.53 324 738.2 324 C740.53 324 742.87 321 745.2 321 C747.2 321 749.2 329.56 751.2 331.1 C760.8 338.49 770.4 339.44 780 343.1 C794.37 348.58 808.73 358.1 823.1 358.1 C824.77 358.1 826.43 351.14 828.1 348.1 C831.77 341.42 835.43 334.77 839.1 330.1 C842.43 325.85 845.77 319.6 849.1 319.6 C851.13 319.6 853.17 324 855.2 324 C856.53 324 857.87 320.86 859.2 320 C863.87 316.98 868.53 316.17 873.2 314 C875.87 312.76 878.53 310 881.2 310 C882.2 310 883.2 313.65 884.2 314 C892.83 317.02 901.47 316.22 910.1 318 C916.77 319.38 923.43 321.84 930.1 324 C936.8 326.17 943.5 328.93 950.2 331.1 C956.87 333.26 963.53 335.02 970.2 337.1 C976.33 339.02 982.47 341.1 988.6 343.1" fill="none" stroke="#73bf69" stroke-width="1.3" stroke-opacity="0.66" stroke-linejoin="round"/>
<path d="M157.6 353.7 C160.4 353.97 163.2 354.14 166 354.5 C171.37 355.19 176.73 356.76 182.1 358.1 C193.1 360.84 204.1 367.7 215.1 367.7 C216.43 367.7 217.77 360.09 219.1 358.1 C222.47 353.08 225.83 348.1 229.2 348.1 C233.53 348.1 237.87 351.42 242.2 353.1 C248.2 355.42 254.2 358.09 260.2 360.1 C265.13 361.76 270.07 363.05 275 364.5 C281 366.26 287 369.7 293 369.7 C293.67 369.7 294.33 358.7 295 352.1 C295.33 348.8 295.67 341.1 296 341.1 C296.33 341.1 296.67 348.04 297 348.1 C299.03 348.45 301.07 348.5 303.1 348.5 C307.77 348.5 312.43 340.25 317.1 339.1 C319.1 338.61 321.1 338.1 323.1 338.1 C329.1 338.1 335.1 344.5 341.1 344.5 C342.43 344.5 343.77 337.68 345.1 337.1 C348.13 335.77 351.17 335.1 354.2 335.1 C357.2 335.1 360.2 339.1 363.2 340.1 C369.87 342.32 376.53 341.67 383.2 344.5 C385.2 345.35 387.2 350.86 389.2 351.7 C393.23 353.39 397.27 354.5 401.3 354.5 C403.87 354.5 406.43 339.65 409 339.1 C410.67 338.74 412.33 338.82 414 338.5 C417.33 337.85 420.67 333.3 424 330.1 C428.7 325.59 433.4 316.99 438.1 314 C441.3 311.96 444.5 309.6 447.7 309.6 C448.83 309.6 449.97 313.6 451.1 313.6 C452.77 313.6 454.43 311 456.1 311 C460.77 311 465.43 314.33 470.1 317.6 C472.13 319.02 474.17 323.07 476.2 324.4 C481.53 327.88 486.87 328.66 492.2 331.1 C496.2 332.93 500.2 335.12 504.2 337.1 C507.87 338.92 511.53 342.5 515.2 342.5 C515.67 342.5 516.13 335.7 516.6 335.7 C517.8 335.7 519 343.96 520.2 345.1 C523.47 348.21 526.73 348.77 530 350.1 C538.37 353.5 546.73 358.1 555.1 358.1 C556.43 358.1 557.77 351.17 559.1 349.1 C562.43 343.92 565.77 341.66 569.1 338.1 C573.1 333.83 577.1 327.87 581.1 325.7 C586.43 322.81 591.77 320 597.1 320 C598.47 320 599.83 322.18 601.2 323 C605.87 325.81 610.53 327.67 615.2 329.7 C623.2 333.18 631.2 335.34 639.2 339.1 C644.47 341.58 649.73 346.01 655 348.1 C656 348.5 657 348.78 658 349.1 C672.03 353.65 686.07 362.1 700.1 362.1 C701.43 362.1 702.77 355.23 704.1 353.1 C710.77 342.44 717.43 334.91 724.1 331.1 C726.8 329.56 729.5 327.7 732.2 327.7 C734.2 327.7 736.2 328.5 738.2 328.5 C740.33 328.5 742.47 325.7 744.6 325.7 C746.8 325.7 749 332.56 751.2 334.1 C760.8 340.84 770.4 342.51 780 346.1 C794.37 351.47 808.73 360.5 823.1 360.5 C824.77 360.5 826.43 354.75 828.1 352.1 C831.77 346.26 835.43 339.99 839.1 335.7 C842.8 331.37 846.5 325 850.2 325 C851.87 325 853.53 328.1 855.2 328.1 C857.2 328.1 859.2 325.99 861.2 325 C867.87 321.69 874.53 315.6 881.2 315.6 C884.2 315.6 887.2 321.19 890.2 322 C896.83 323.8 903.47 323.78 910.1 325 C916.77 326.22 923.43 327.94 930.1 329.7 C936.13 331.29 942.17 333.54 948.2 335.1 C955.53 337 962.87 338 970.2 340.1 C976.33 341.86 982.47 344.77 988.6 347.1 L988.6 439 L157.6 439 Z" fill="#fade2a" fill-opacity="0.1"/>
<path d="M157.6 353.7 C160.4 353.97 163.2 354.14 166 354.5 C171.37 355.19 176.73 356.76 182.1 358.1 C193.1 360.84 204.1 367.7 215.1 367.7 C216.43 367.7 217.77 360.09 219.1 358.1 C222.47 353.08 225.83 348.1 229.2 348.1 C233.53 348.1 237.87 351.42 242.2 353.1 C248.2 355.42 254.2 358.09 260.2 360.1 C265.13 361.76 270.07 363.05 275 364.5 C281 366.26 287 369.7 293 369.7 C293.67 369.7 294.33 358.7 295 352.1 C295.33 348.8 295.67 341.1 296 341.1 C296.33 341.1 296.67 348.04 297 348.1 C299.03 348.45 301.07 348.5 303.1 348.5 C307.77 348.5 312.43 340.25 317.1 339.1 C319.1 338.61 321.1 338.1 323.1 338.1 C329.1 338.1 335.1 344.5 341.1 344.5 C342.43 344.5 343.77 337.68 345.1 337.1 C348.13 335.77 351.17 335.1 354.2 335.1 C357.2 335.1 360.2 339.1 363.2 340.1 C369.87 342.32 376.53 341.67 383.2 344.5 C385.2 345.35 387.2 350.86 389.2 351.7 C393.23 353.39 397.27 354.5 401.3 354.5 C403.87 354.5 406.43 339.65 409 339.1 C410.67 338.74 412.33 338.82 414 338.5 C417.33 337.85 420.67 333.3 424 330.1 C428.7 325.59 433.4 316.99 438.1 314 C441.3 311.96 444.5 309.6 447.7 309.6 C448.83 309.6 449.97 313.6 451.1 313.6 C452.77 313.6 454.43 311 456.1 311 C460.77 311 465.43 314.33 470.1 317.6 C472.13 319.02 474.17 323.07 476.2 324.4 C481.53 327.88 486.87 328.66 492.2 331.1 C496.2 332.93 500.2 335.12 504.2 337.1 C507.87 338.92 511.53 342.5 515.2 342.5 C515.67 342.5 516.13 335.7 516.6 335.7 C517.8 335.7 519 343.96 520.2 345.1 C523.47 348.21 526.73 348.77 530 350.1 C538.37 353.5 546.73 358.1 555.1 358.1 C556.43 358.1 557.77 351.17 559.1 349.1 C562.43 343.92 565.77 341.66 569.1 338.1 C573.1 333.83 577.1 327.87 581.1 325.7 C586.43 322.81 591.77 320 597.1 320 C598.47 320 599.83 322.18 601.2 323 C605.87 325.81 610.53 327.67 615.2 329.7 C623.2 333.18 631.2 335.34 639.2 339.1 C644.47 341.58 649.73 346.01 655 348.1 C656 348.5 657 348.78 658 349.1 C672.03 353.65 686.07 362.1 700.1 362.1 C701.43 362.1 702.77 355.23 704.1 353.1 C710.77 342.44 717.43 334.91 724.1 331.1 C726.8 329.56 729.5 327.7 732.2 327.7 C734.2 327.7 736.2 328.5 738.2 328.5 C740.33 328.5 742.47 325.7 744.6 325.7 C746.8 325.7 749 332.56 751.2 334.1 C760.8 340.84 770.4 342.51 780 346.1 C794.37 351.47 808.73 360.5 823.1 360.5 C824.77 360.5 826.43 354.75 828.1 352.1 C831.77 346.26 835.43 339.99 839.1 335.7 C842.8 331.37 846.5 325 850.2 325 C851.87 325 853.53 328.1 855.2 328.1 C857.2 328.1 859.2 325.99 861.2 325 C867.87 321.69 874.53 315.6 881.2 315.6 C884.2 315.6 887.2 321.19 890.2 322 C896.83 323.8 903.47 323.78 910.1 325 C916.77 326.22 923.43 327.94 930.1 329.7 C936.13 331.29 942.17 333.54 948.2 335.1 C955.53 337 962.87 338 970.2 340.1 C976.33 341.86 982.47 344.77 988.6 347.1" fill="none" stroke="#fade2a" stroke-width="1.3" stroke-opacity="0.66" stroke-linejoin="round"/>
<path d="M157.6 388.2 C161.73 388.2 165.87 388.2 170 388.2 C173.37 388.2 176.73 387.71 180.1 387.2 C181.43 387 182.77 386.2 184.1 386.2 C185.77 386.2 187.43 386.6 189.1 386.6 C189.77 386.6 190.43 385.2 191.1 385.2 C191.77 385.2 192.43 387.2 193.1 387.2 C194.77 387.2 196.43 381.81 198.1 380.2 C199.43 378.91 200.77 377.43 202.1 377.2 C204.77 376.74 207.43 376.5 210.1 376.5 C213.43 376.5 216.77 377.79 220.1 378.2 C222.13 378.45 224.17 378.44 226.2 378.8 C227.53 379.04 228.87 380.87 230.2 381.2 C233.53 382.03 236.87 382.32 240.2 382.6 C243.53 382.88 246.87 383.08 250.2 383.2 C258.47 383.5 266.73 383.61 275 383.8 C281.33 383.94 287.67 383.85 294 384.2 C294.87 384.25 295.73 388.8 296.6 388.8 C297.73 388.8 298.87 386.37 300 384.2 C301.37 381.58 302.73 370.81 304.1 370.1 C306.1 369.05 308.1 368.5 310.1 368.5 C313.77 368.5 317.43 371.4 321.1 373.1 C323.77 374.33 326.43 376.28 329.1 377.2 C333.1 378.58 337.1 380.2 341.1 380.2 C341.77 380.2 342.43 375.2 343.1 375.2 C344.43 375.2 345.77 380.94 347.1 381.2 C349.13 381.6 351.17 381.8 353.2 381.8 C353.87 381.8 354.53 378.6 355.2 378.6 C356.2 378.6 357.2 386.2 358.2 386.2 C359.87 386.2 361.53 382.41 363.2 382.2 C365.2 381.95 367.2 382.05 369.2 381.8 C371.2 381.55 373.2 377.75 375.2 377.2 C377.2 376.65 379.2 376.2 381.2 376.2 C382.4 376.2 383.6 385.2 384.8 385.2 C386.6 385.2 388.4 361.1 390.2 361.1 C392.53 361.1 394.87 362.71 397.2 364.1 C398.57 364.91 399.93 367.21 401.3 367.7 C403.53 368.49 405.77 368.22 408 369.1 C409.13 369.55 410.27 373.7 411.4 373.7 C412.6 373.7 413.8 366.1 415 364.1 C418 359.1 421 357.03 424 354.1 C428.03 350.17 432.07 347.04 436.1 343.7 C439.43 340.94 442.77 335.7 446.1 335.7 C446.57 335.7 447.03 350.1 447.5 350.1 C448.37 350.1 449.23 326.88 450.1 325 C452.43 319.93 454.77 317.6 457.1 317.6 C458.77 317.6 460.43 320.43 462.1 322 C463.77 323.57 465.43 324.16 467.1 327.1 C468.43 329.45 469.77 349.1 471.1 349.1 C472.8 349.1 474.5 336.42 476.2 336.1 C477.53 335.85 478.87 335.7 480.2 335.7 C482.87 335.7 485.53 339.21 488.2 341.1 C490.87 342.99 493.53 344.95 496.2 347.1 C498.87 349.25 501.53 352.7 504.2 354.1 C506.87 355.5 509.53 355.1 512.2 357.1 C513.53 358.1 514.87 372.1 516.2 372.1 C517.53 372.1 518.87 359.1 520.2 359.1 C523.47 359.1 526.73 359.35 530 359.7 C531.67 359.88 533.33 360.75 535 361.1 C541.7 362.49 548.4 364.1 555.1 364.1 C557.77 364.1 560.43 361.96 563.1 359.1 C564.43 357.67 565.77 351.07 567.1 349.1 C571.77 342.19 576.43 338.31 581.1 336.1 C586.43 333.58 591.77 331.1 597.1 331.1 C598.47 331.1 599.83 331.68 601.2 332.1 C605.2 333.34 609.2 336.43 613.2 338.1 C619.87 340.89 626.53 341.32 633.2 345.1 C635.2 346.24 637.2 350.34 639.2 351.1 C641.2 351.86 643.2 351.84 645.2 352.5 C646.8 353.03 648.4 354.56 650 355.1 C651.33 355.55 652.67 355.4 654 356.1 C654.67 356.45 655.33 363.79 656 364.1 C658.67 365.34 661.33 365.7 664 365.7 C666 365.7 668 364.5 670 364.5 C672.03 364.5 674.07 364.71 676.1 365.1 C677.43 365.35 678.77 368.64 680.1 369.1 C686.77 371.4 693.43 372.5 700.1 372.5 C703.43 372.5 706.77 370.07 710.1 368.1 C712.1 366.92 714.1 364.63 716.1 363.1 C719.47 360.53 722.83 359.25 726.2 356.1 C726.87 355.48 727.53 353.7 728.2 353.7 C729.53 353.7 730.87 363.7 732.2 363.7 C734.2 363.7 736.2 350.05 738.2 348.1 C740.2 346.15 742.2 344.5 744.2 344.5 C745.53 344.5 746.87 361.1 748.2 361.1 C749.2 361.1 750.2 344.73 751.2 344.1 C752.2 343.47 753.2 343.1 754.2 343.1 C758.2 343.1 762.2 346.86 766.2 349.1 C768.87 350.59 771.53 352.15 774.2 354.1 C776.13 355.51 778.07 357.67 780 359.1 C781 359.84 782 360.71 783 361.1 C790.37 363.94 797.73 364.44 805.1 366.1 C810.43 367.3 815.77 369.7 821.1 369.7 C822.43 369.7 823.77 368.5 825.1 368.5 C827.1 368.5 829.1 369.1 831.1 369.1 C833.77 369.1 836.43 365.38 839.1 363.1 C842.1 360.54 845.1 354.1 848.1 354.1 C849 354.1 849.9 364.5 850.8 364.5 C851.93 364.5 853.07 342.31 854.2 341.1 C859.2 335.75 864.2 336.11 869.2 334.1 C872.53 332.76 875.87 330.5 879.2 330.5 C881.2 330.5 883.2 330.66 885.2 331.1 C886.13 331.31 887.07 340.05 888 344.1 C889.07 348.73 890.13 357.1 891.2 357.1 C891.73 357.1 892.27 356.1 892.8 356.1 C893.93 356.1 895.07 372.74 896.2 373.1 C898.5 373.83 900.8 373.5 903.1 374.1 C904.1 374.36 905.1 376.2 906.1 376.2 C907.43 376.2 908.77 367.7 910.1 367.7 C911.77 367.7 913.43 380.26 915.1 381.2 C918.1 382.9 921.1 383.03 924.1 383.8 C926.1 384.31 928.1 385.2 930.1 385.2 C932.77 385.2 935.43 383.8 938.1 383.8 C940.1 383.8 942.1 385.8 944.1 385.8 C947.47 385.8 950.83 383.75 954.2 383.2 C958.2 382.55 962.2 381.8 966.2 381.8 C968.2 381.8 970.2 385.2 972.2 385.2 C975.53 385.2 978.87 385.2 982.2 385.2 C984.33 385.2 986.47 383.47 988.6 382.6 L988.6 439 L157.6 439 Z" fill="#8ab8ff" fill-opacity="0.1"/>
<path d="M157.6 388.2 C161.73 388.2 165.87 388.2 170 388.2 C173.37 388.2 176.73 387.71 180.1 387.2 C181.43 387 182.77 386.2 184.1 386.2 C185.77 386.2 187.43 386.6 189.1 386.6 C189.77 386.6 190.43 385.2 191.1 385.2 C191.77 385.2 192.43 387.2 193.1 387.2 C194.77 387.2 196.43 381.81 198.1 380.2 C199.43 378.91 200.77 377.43 202.1 377.2 C204.77 376.74 207.43 376.5 210.1 376.5 C213.43 376.5 216.77 377.79 220.1 378.2 C222.13 378.45 224.17 378.44 226.2 378.8 C227.53 379.04 228.87 380.87 230.2 381.2 C233.53 382.03 236.87 382.32 240.2 382.6 C243.53 382.88 246.87 383.08 250.2 383.2 C258.47 383.5 266.73 383.61 275 383.8 C281.33 383.94 287.67 383.85 294 384.2 C294.87 384.25 295.73 388.8 296.6 388.8 C297.73 388.8 298.87 386.37 300 384.2 C301.37 381.58 302.73 370.81 304.1 370.1 C306.1 369.05 308.1 368.5 310.1 368.5 C313.77 368.5 317.43 371.4 321.1 373.1 C323.77 374.33 326.43 376.28 329.1 377.2 C333.1 378.58 337.1 380.2 341.1 380.2 C341.77 380.2 342.43 375.2 343.1 375.2 C344.43 375.2 345.77 380.94 347.1 381.2 C349.13 381.6 351.17 381.8 353.2 381.8 C353.87 381.8 354.53 378.6 355.2 378.6 C356.2 378.6 357.2 386.2 358.2 386.2 C359.87 386.2 361.53 382.41 363.2 382.2 C365.2 381.95 367.2 382.05 369.2 381.8 C371.2 381.55 373.2 377.75 375.2 377.2 C377.2 376.65 379.2 376.2 381.2 376.2 C382.4 376.2 383.6 385.2 384.8 385.2 C386.6 385.2 388.4 361.1 390.2 361.1 C392.53 361.1 394.87 362.71 397.2 364.1 C398.57 364.91 399.93 367.21 401.3 367.7 C403.53 368.49 405.77 368.22 408 369.1 C409.13 369.55 410.27 373.7 411.4 373.7 C412.6 373.7 413.8 366.1 415 364.1 C418 359.1 421 357.03 424 354.1 C428.03 350.17 432.07 347.04 436.1 343.7 C439.43 340.94 442.77 335.7 446.1 335.7 C446.57 335.7 447.03 350.1 447.5 350.1 C448.37 350.1 449.23 326.88 450.1 325 C452.43 319.93 454.77 317.6 457.1 317.6 C458.77 317.6 460.43 320.43 462.1 322 C463.77 323.57 465.43 324.16 467.1 327.1 C468.43 329.45 469.77 349.1 471.1 349.1 C472.8 349.1 474.5 336.42 476.2 336.1 C477.53 335.85 478.87 335.7 480.2 335.7 C482.87 335.7 485.53 339.21 488.2 341.1 C490.87 342.99 493.53 344.95 496.2 347.1 C498.87 349.25 501.53 352.7 504.2 354.1 C506.87 355.5 509.53 355.1 512.2 357.1 C513.53 358.1 514.87 372.1 516.2 372.1 C517.53 372.1 518.87 359.1 520.2 359.1 C523.47 359.1 526.73 359.35 530 359.7 C531.67 359.88 533.33 360.75 535 361.1 C541.7 362.49 548.4 364.1 555.1 364.1 C557.77 364.1 560.43 361.96 563.1 359.1 C564.43 357.67 565.77 351.07 567.1 349.1 C571.77 342.19 576.43 338.31 581.1 336.1 C586.43 333.58 591.77 331.1 597.1 331.1 C598.47 331.1 599.83 331.68 601.2 332.1 C605.2 333.34 609.2 336.43 613.2 338.1 C619.87 340.89 626.53 341.32 633.2 345.1 C635.2 346.24 637.2 350.34 639.2 351.1 C641.2 351.86 643.2 351.84 645.2 352.5 C646.8 353.03 648.4 354.56 650 355.1 C651.33 355.55 652.67 355.4 654 356.1 C654.67 356.45 655.33 363.79 656 364.1 C658.67 365.34 661.33 365.7 664 365.7 C666 365.7 668 364.5 670 364.5 C672.03 364.5 674.07 364.71 676.1 365.1 C677.43 365.35 678.77 368.64 680.1 369.1 C686.77 371.4 693.43 372.5 700.1 372.5 C703.43 372.5 706.77 370.07 710.1 368.1 C712.1 366.92 714.1 364.63 716.1 363.1 C719.47 360.53 722.83 359.25 726.2 356.1 C726.87 355.48 727.53 353.7 728.2 353.7 C729.53 353.7 730.87 363.7 732.2 363.7 C734.2 363.7 736.2 350.05 738.2 348.1 C740.2 346.15 742.2 344.5 744.2 344.5 C745.53 344.5 746.87 361.1 748.2 361.1 C749.2 361.1 750.2 344.73 751.2 344.1 C752.2 343.47 753.2 343.1 754.2 343.1 C758.2 343.1 762.2 346.86 766.2 349.1 C768.87 350.59 771.53 352.15 774.2 354.1 C776.13 355.51 778.07 357.67 780 359.1 C781 359.84 782 360.71 783 361.1 C790.37 363.94 797.73 364.44 805.1 366.1 C810.43 367.3 815.77 369.7 821.1 369.7 C822.43 369.7 823.77 368.5 825.1 368.5 C827.1 368.5 829.1 369.1 831.1 369.1 C833.77 369.1 836.43 365.38 839.1 363.1 C842.1 360.54 845.1 354.1 848.1 354.1 C849 354.1 849.9 364.5 850.8 364.5 C851.93 364.5 853.07 342.31 854.2 341.1 C859.2 335.75 864.2 336.11 869.2 334.1 C872.53 332.76 875.87 330.5 879.2 330.5 C881.2 330.5 883.2 330.66 885.2 331.1 C886.13 331.31 887.07 340.05 888 344.1 C889.07 348.73 890.13 357.1 891.2 357.1 C891.73 357.1 892.27 356.1 892.8 356.1 C893.93 356.1 895.07 372.74 896.2 373.1 C898.5 373.83 900.8 373.5 903.1 374.1 C904.1 374.36 905.1 376.2 906.1 376.2 C907.43 376.2 908.77 367.7 910.1 367.7 C911.77 367.7 913.43 380.26 915.1 381.2 C918.1 382.9 921.1 383.03 924.1 383.8 C926.1 384.31 928.1 385.2 930.1 385.2 C932.77 385.2 935.43 383.8 938.1 383.8 C940.1 383.8 942.1 385.8 944.1 385.8 C947.47 385.8 950.83 383.75 954.2 383.2 C958.2 382.55 962.2 381.8 966.2 381.8 C968.2 381.8 970.2 385.2 972.2 385.2 C975.53 385.2 978.87 385.2 982.2 385.2 C984.33 385.2 986.47 383.47 988.6 382.6" fill="none" stroke="#8ab8ff" stroke-width="1.15" stroke-opacity="0.66" stroke-linejoin="round"/>
<path d="M178.1 443.06 L212.5 441.54 L247.6 439.61 L280.1 442.25 L316.6 444.38 L350.4 445.7 L379 448.84 L410 450.98 L419.5 452.09 L454 449.05 L502.1 441.74 L523.1 437.68 L568.2 436.16 L628.2 433.11 L700 438.29 L730 442.15 L804.8 440.01 L879.6 442.15 L975.4 439.71 L975.4 439 L178.1 439 Z" fill="#ff9830" fill-opacity="0.1"/>
<path d="M178.1 443.06 L212.5 441.54 L247.6 439.61 L280.1 442.25 L316.6 444.38 L350.4 445.7 L379 448.84 L410 450.98 L419.5 452.09 L454 449.05 L502.1 441.74 L523.1 437.68 L568.2 436.16 L628.2 433.11 L700 438.29 L730 442.15 L804.8 440.01 L879.6 442.15 L975.4 439.71" fill="none" stroke="#e8842a" stroke-width="1.4" stroke-opacity="0.9" stroke-linejoin="round"/>
<path d="M993.2 255.2 L995.2 255.2 L995.2 253.2 Z" fill="#606066" stroke="#606066" stroke-width="0.6" stroke-linejoin="round"/>
<path d="M773 204.5 L773 213.5 L775.2 211.4 L776.8 214.8 L778.2 214.1 L776.7 210.9 L779.6 210.7 Z" fill="#f4f4f4" stroke="#000" stroke-width="0.9" stroke-linejoin="round"/>
<rect x="820.9" y="218.3" width="116.1" height="57.1" rx="2" fill="#22252b" stroke="#2c2f35" stroke-width="0.8"/>
<text x="824.8" y="229.1" font-size="6.8" fill="#ccccdc" textLength="64.2" lengthAdjust="spacingAndGlyphs">2023-11-22 15:40:19</text>
<rect x="824.8" y="236.5" width="7.5" height="2" rx="1" fill="#73bf69"/>
<text x="836.3" y="239.1" font-size="6.8" fill="#ccccdc" textLength="58.6" lengthAdjust="spacingAndGlyphs">WW Speicher oben</text>
<text x="932.8" y="239.1" font-size="6.8" fill="#ccccdc" text-anchor="end">47.7 °C</text>
<rect x="824.8" y="246.1" width="7.5" height="2" rx="1" fill="#fade2a"/>
<text x="836.3" y="248.7" font-size="6.8" fill="#ccccdc" textLength="60.5" lengthAdjust="spacingAndGlyphs">WW Speicher unten</text>
<text x="932.8" y="248.7" font-size="6.8" fill="#ccccdc" text-anchor="end">46 °C</text>
<rect x="824.8" y="256.4" width="7.5" height="2" rx="1" fill="#8ab8ff"/>
<text x="836.3" y="259" font-size="6.8" fill="#ccccdc" textLength="35.5" lengthAdjust="spacingAndGlyphs">WW Vorlauf</text>
<text x="932.8" y="259" font-size="6.8" fill="#ccccdc" text-anchor="end">42.4 °C</text>
<rect x="824.8" y="265.9" width="7.5" height="2" rx="1" fill="#ff9830"/>
<text x="836.3" y="268.5" font-size="6.8" fill="#ffffff" textLength="57.9" lengthAdjust="spacingAndGlyphs" font-weight="bold">Aussentemperatur</text>
<text x="932.8" y="268.5" font-size="6.8" fill="#ffffff" font-weight="bold" text-anchor="end">0.300 °C</text>
</svg></body></html>
